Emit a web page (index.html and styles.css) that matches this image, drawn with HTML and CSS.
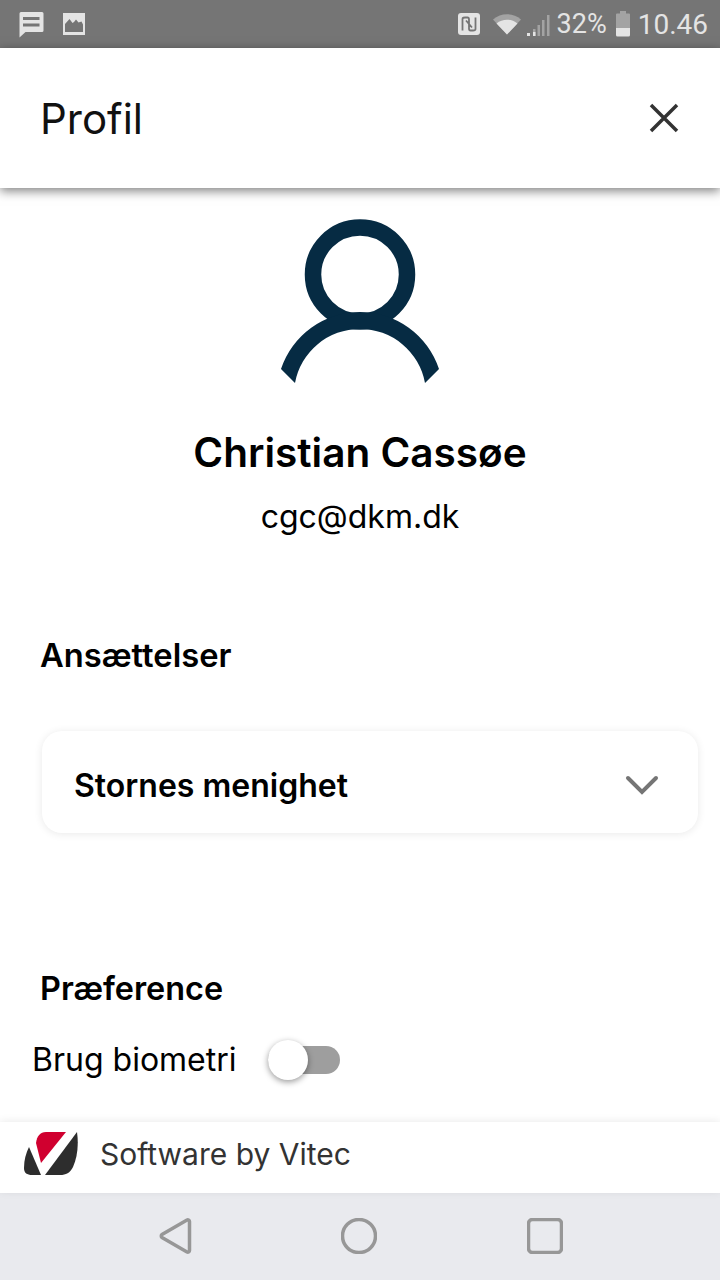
FILE: index.html
```html
<!DOCTYPE html>
<html lang="da">
<head>
    <meta charset="UTF-8">
    <meta name="viewport" content="width=device-width, initial-scale=1.0">
    <title>Profil</title>
    <link rel="stylesheet" href="styles.css">
</head>
<body>

<div class="status-bar">
    <div class="status-left">
        <svg width="28" height="26" viewBox="0 0 28 26">
            <path class="status-fill" d="M4 0h21a1.500 1.500 0 0 1 1.500 1.500v17a1.500 1.500 0 0 1-1.500 1.500H8.500L2.500 25.500V1.500A1.500 1.500 0 0 1 4 0z"/>
            <path class="status-cut" d="M6 5h16.500v3H6zM6 11.500h16.500v3H6z"/>
        </svg>
        <svg width="24" height="24" viewBox="0 0 24 24">
            <path class="status-fill" d="M1 1h22v22H1z"/>
            <path class="status-cut" d="M3 20V12l4.500-5 3 4 1.500-1 2-2.500 2.500 3 3-1 1.500 3v7.500z"/>
        </svg>
    </div>
    <div class="status-right">
        <svg width="24" height="24" viewBox="0 0 24 24">
            <rect class="status-fill" x="1" y="1" width="22" height="22" rx="3"/>
            <path class="status-line" d="M5.500 18.500V7c0-1.500 1.500-1.500 2.500-1.500h2.500c1 0 1.500 1 1.500 2v4.500M18.500 5.500V17c0 1.500-1.500 1.500-2.500 1.500h-2.500c-1 0-1.500-1-1.500-2V12M9 8.500l6 7"/>
        </svg>
        <svg class="wifi" width="28" height="22" viewBox="0 0 28 22">
            <path class="status-dim" d="M0 6.500C8-.5 20-.5 28 6.500l-14 15z"/>
            <path class="status-fill" d="M3.500 10.500C9.500 5.500 18.500 5.500 24.500 10.500L14 21.500z"/>
        </svg>
        <svg width="24" height="24" viewBox="0 0 24 24">
            <path class="status-fill" d="M0 21h3v3H0z"/>
            <path class="status-dim" d="M6 17h2.500v7H6zM10.500 13H13v11h-2.500zM15 8h2.500v16H15zM20 3h2.500v21H20z"/>
            <path class="status-fill" d="M6 20h2.500v4H6z"/>
        </svg>
        <span class="status-text percent">32%</span>
        <svg class="battery" width="16" height="26" viewBox="0 0 16 26">
            <path class="status-dim" d="M5 0h6v2.500h3a1 1 0 0 1 1 1V17H1V3.500a1 1 0 0 1 1-1h3z"/>
            <path class="status-fill" d="M1 17h14v7a1.500 1.500 0 0 1-1.500 1.500h-11A1.500 1.500 0 0 1 1 24z"/>
        </svg>
        <span class="status-text">10.46</span>
    </div>
</div>

<div class="screen">
    <header class="top-bar">
        <h1>Profil</h1>
        <svg class="close" width="32" height="32" viewBox="0 0 32 32">
            <path d="M3 3l26 26M29 3L3 29"/>
        </svg>
    </header>

    <main class="content">
        <svg class="avatar" width="160" height="166" viewBox="0 0 160 166">
            <circle cx="80" cy="56.500" r="47"/>
            <path d="M1 151A83.200 83.200 0 0 1 159 151L145 165A66.100 66.100 0 0 0 15 165z"/>
        </svg>
        <div class="name">Christian Cassøe</div>
        <div class="email">cgc@dkm.dk</div>

        <h2 class="section-title">Ansættelser</h2>
        <div class="select-card">
            <span>Stornes menighet</span>
            <svg width="34" height="20" viewBox="0 0 34 20">
                <path d="M3 3L17 17 31 3"/>
            </svg>
        </div>

        <h2 class="section-title pref-title">Præference</h2>
        <div class="pref-row">
            <span>Brug biometri</span>
            <div class="toggle"><div class="knob"></div></div>
        </div>
    </main>

    <footer class="vendor">
        <svg width="54" height="44" viewBox="0 0 54 44">
            <path class="logo-red" d="M12 11C13 4 16 0 22 0H42L17 31z"/>
            <path class="logo-dark" d="M53 0C55 14 53 26 49 35C46 41 42 43 36 43H21z"/>
            <path class="logo-dark" d="M5 15L17 43H8C3 43 0 41 0 36C0 28 2 21 5 15z"/>
        </svg>
        <span>Software by Vitec</span>
    </footer>
</div>

<nav class="nav-bar">
    <svg width="34" height="36" viewBox="0 0 34 36">
        <path d="M30.500 3.500v29c0 1.500-1.500 2-2.500 1.500L3 19.500c-1-.7-1-2.300 0-3L28 2c1-.5 2.500 0 2.500 1.500z"/>
    </svg>
    <svg width="36" height="36" viewBox="0 0 36 36">
        <circle cx="18" cy="18" r="16.500"/>
    </svg>
    <svg class="nav-square" width="36" height="36" viewBox="0 0 36 36">
        <rect x="1.500" y="1.500" width="33" height="33" rx="4"/>
    </svg>
</nav>

</body>
</html>
```

FILE: styles.css
```css
* {
    box-sizing: border-box;
}
body {
    margin: 0;
    width: 720px;
    height: 1280px;
    overflow: hidden;
    display: flex;
    flex-direction: column;
    font-family: Inter, "Liberation Sans", sans-serif;
    color: #000;
    background-color: #fff;
}

.status-bar {
    height: 48px;
    flex: none;
    display: flex;
    justify-content: space-between;
    align-items: center;
    padding: 0 12px 0 17px;
    background-color: #757575;
}
.status-left, .status-right {
    display: flex;
    align-items: center;
}
.status-left {
    gap: 17px;
}
.status-left svg:first-child {
    margin-top: 2px;
}
.status-right {
    gap: 6px;
}
.status-fill {
    fill: #e4e4e4;
}
.status-cut {
    fill: #757575;
}
.status-line {
    fill: none;
    stroke: #757575;
    stroke-width: 1.800;
}
.status-dim {
    fill: #a3a3a3;
}
.wifi {
    margin-left: 6px;
}
.status-text {
    font-family: Roboto, sans-serif;
    font-size: 28px;
    color: #e4e4e4;
}
.percent {
    font-size: 27px;
}
.battery {
    margin: 0 1px 0 2px;
}

.screen {
    flex: 1;
    display: flex;
    flex-direction: column;
    min-height: 0;
}
.top-bar {
    height: 140px;
    flex: none;
    display: flex;
    justify-content: space-between;
    align-items: center;
    padding: 0 40px 0 40px;
    background-color: #fff;
    box-shadow: 0 3px 10px rgba(0, 0, 0, 0.5);
    position: relative;
}
.top-bar h1 {
    margin: 0;
    font-size: 42px;
    font-weight: 400;
    color: #111;
}
.close path {
    fill: none;
    stroke: #333;
    stroke-width: 3.500;
}

.content {
    flex: 1;
    min-height: 0;
    display: flex;
    flex-direction: column;
    padding-top: 30px;
}
.avatar {
    align-self: center;
    flex: none;
}
.avatar circle {
    fill: none;
    stroke: #062b43;
    stroke-width: 16.500;
}
.avatar path {
    fill: #062b43;
}
.name {
    margin-top: 46px;
    text-align: center;
    font-size: 40.500px;
    line-height: 46px;
    font-weight: 600;
}
.email {
    margin-top: 21px;
    text-align: center;
    font-size: 32px;
    line-height: 40px;
}
.section-title {
    margin: 98px 0 0 40px;
    font-size: 32.700px;
    line-height: 40px;
    font-weight: 600;
}
.select-card {
    margin: 56px 22px 0 42px;
    height: 102px;
    display: flex;
    justify-content: space-between;
    align-items: center;
    padding: 6px 39px 0 32px;
    border-radius: 20px;
    background-color: #fff;
    box-shadow: 0 1px 8px rgba(0, 0, 0, 0.09);
    font-size: 32px;
    font-weight: 600;
}
.select-card path {
    fill: none;
    stroke: #757575;
    stroke-width: 4;
    stroke-linecap: round;
}
.pref-title {
    margin-top: 136px;
    margin-left: 40px;
    font-size: 32.400px;
}
.pref-row {
    margin: 31px 0 0 32px;
    display: flex;
    align-items: center;
    gap: 31px;
    font-size: 32px;
    line-height: 40px;
}
.toggle {
    width: 72px;
    height: 28px;
    border-radius: 14px;
    background-color: #9e9e9e;
    position: relative;
}
.knob {
    position: absolute;
    left: 0;
    top: -6px;
    width: 40px;
    height: 40px;
    border-radius: 50%;
    background-color: #fff;
    box-shadow: 0 2px 6px rgba(0, 0, 0, 0.4);
}

.vendor {
    height: 71px;
    flex: none;
    display: flex;
    align-items: center;
    gap: 22px;
    padding: 0 0 7px 24px;
    background-color: #fff;
    box-shadow: 0 -1px 8px rgba(0, 0, 0, 0.08);
    position: relative;
    font-size: 30px;
    color: #333;
}
.logo-red {
    fill: #d0002f;
}
.logo-dark {
    fill: #2d2d2d;
}

.nav-bar {
    height: 87px;
    flex: none;
    display: flex;
    align-items: center;
    padding: 0 0 1px 159px;
    gap: 148px;
    background-color: #e9eaee;
}
.nav-bar svg {
    fill: none;
    stroke: #979797;
    stroke-width: 3.500;
}
.nav-bar .nav-square {
    margin-left: 2px;
}
```
